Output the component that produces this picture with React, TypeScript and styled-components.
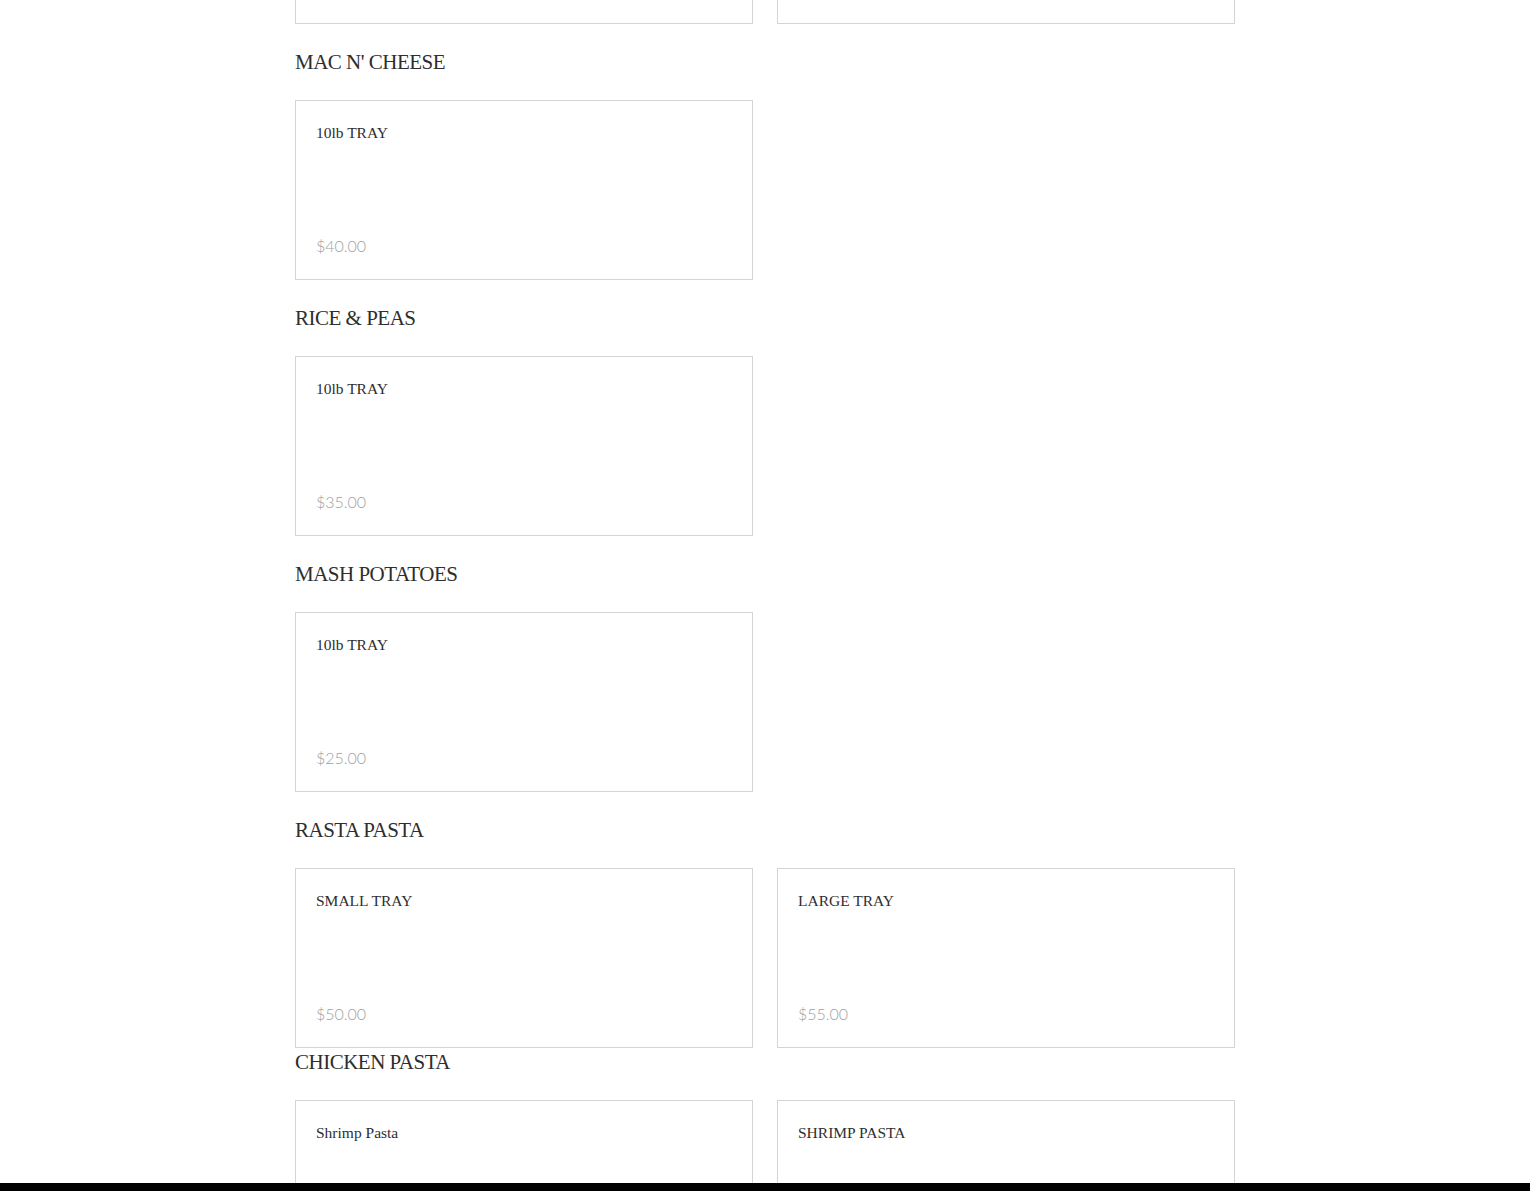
import styled, { createGlobalStyle } from 'styled-components';

const GlobalStyle = createGlobalStyle`
	html, body {
		margin: 0;
		padding: 0;
		background: #ffffff;
	}
	body {
		font-family: 'Liberation Serif', 'DejaVu Serif', serif;
		color: #2f2e2e;
	}
`;

// page is scrolled: the previous section's cards end just below the top edge
const Page = styled.main`
	width: 940px;
	margin: -182px auto 0;
	display: flex;
	flex-direction: column;
`;

const Section = styled.section<{ $tight?: boolean }>`
	display: flex;
	flex-direction: column;
	margin-top: ${(p) => (p.$tight ? '2px' : '26px')};
`;

const Heading = styled.h2`
	margin: 0 0 25px;
	font-family: 'Liberation Serif', 'DejaVu Serif', serif;
	font-weight: 400;
	font-size: 21px;
	line-height: 25px;
	letter-spacing: -0.5px;
	color: #2f2e2e;
`;

const Grid = styled.div`
	display: grid;
	grid-template-columns: repeat(2, 458px);
	column-gap: 24px;
`;

const Card = styled.div`
	box-sizing: border-box;
	height: 180px;
	padding: 22px 20px 23px;
	border: 1px solid #d4d4d4;
	display: flex;
	flex-direction: column;
	justify-content: space-between;
`;

const ItemName = styled.div`
	font-family: 'Liberation Serif', 'DejaVu Serif', serif;
	font-size: 15.5px;
	line-height: 20px;
	color: #2f2e2e;
`;

const Price = styled.div`
	font-family: Lato, 'Open Sans', sans-serif;
	font-weight: 300;
	font-size: 16px;
	line-height: 20px;
	color: #a0a0a0;
`;

const FooterBar = styled.div`
	position: fixed;
	left: 0;
	right: 0;
	bottom: 0;
	height: 8px;
	background: #000000;
`;

type Item = { name?: string; price?: string };
type MenuSection = { title?: string; items: Item[]; tight?: boolean };

const sections: MenuSection[] = [
	// previous section, scrolled out of view
	{ items: [{}, {}] },
	{ title: "MAC N' CHEESE", items: [{ name: '10lb TRAY', price: '$40.00' }] },
	{ title: 'RICE & PEAS', items: [{ name: '10lb TRAY', price: '$35.00' }] },
	{ title: 'MASH POTATOES', items: [{ name: '10lb TRAY', price: '$25.00' }] },
	{
		title: 'RASTA PASTA',
		items: [
			{ name: 'SMALL TRAY', price: '$50.00' },
			{ name: 'LARGE TRAY', price: '$55.00' },
		],
	},
	{
		title: 'CHICKEN PASTA',
		tight: true,
		items: [{ name: 'Shrimp Pasta' }, { name: 'SHRIMP PASTA' }],
	},
];

const App = () => {
	return (
		<>
			<GlobalStyle />
			<Page>
				{sections.map((section, i) => (
					<Section key={i} $tight={section.tight}>
						{section.title && <Heading>{section.title}</Heading>}
						<Grid>
							{section.items.map((item, j) => (
								<Card key={j}>
									<ItemName>{item.name}</ItemName>
									{item.price && <Price>{item.price}</Price>}
								</Card>
							))}
						</Grid>
					</Section>
				))}
			</Page>
			<FooterBar />
		</>
	);
};

export default App;
